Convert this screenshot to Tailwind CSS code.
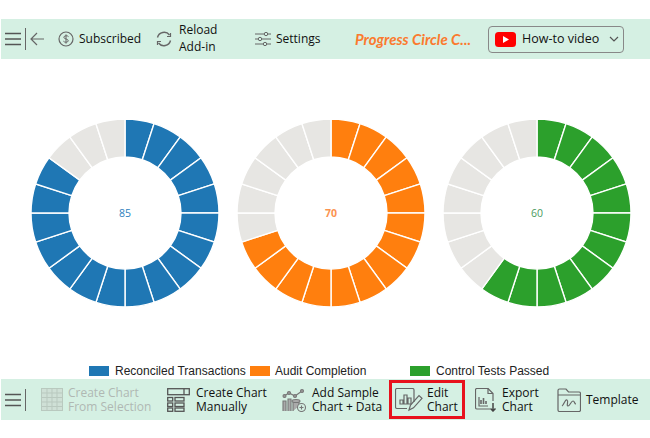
<!DOCTYPE html>
<html lang="en">
<head>
  <meta charset="UTF-8" />
  <title>Progress Circle Chart</title>
  <script src="https://cdn.jsdelivr.net/npm/@tailwindcss/browser@4"></script>
</head>
<body class="bg-white w-[650px] h-[438px] overflow-hidden font-['Open_Sans',sans-serif] text-[12px] leading-[14px] text-[#111]">

  <div class="h-[19px]"></div>

  <!-- Top toolbar -->
  <header class="ml-px h-[40px] bg-[#d5f0e3] flex items-center">
    <svg class="ml-1 w-[16px] h-[14px]" viewBox="0 0 16 14" fill="none" stroke="#555" stroke-width="1.6"><path d="M0 1.500h16M0 7h16M0 12.500h16"/></svg>
    <div class="ml-1 w-px h-[22px] bg-[#666]"></div>
    <svg class="ml-1 w-[14px] h-[14px]" viewBox="0 0 14 14" fill="none" stroke="#666" stroke-width="1.200"><path d="M14 7H1M7 1 1 7l6 6"/></svg>
    <svg class="ml-[14px] w-[16px] h-[16px]" viewBox="0 0 16 16" fill="none" stroke="#666" stroke-width="1.200"><circle cx="8" cy="8" r="7"/><path d="M10.500 5.600C10 4.600 6 4.200 5.800 6.200 5.700 8.300 10.400 7.600 10.300 9.900 10 11.800 6 11.400 5.400 10.200M8 3.400v9.200" stroke-width="1"/></svg>
    <span class="ml-[5px] w-[62px] whitespace-nowrap">Subscribed</span>
    <svg class="ml-[14px] w-[18px] h-[18px]" viewBox="0 0 18 18" fill="none" stroke="#666" stroke-width="1.400"><path d="M2.500 7.500A6.800 6.800 0 0 1 14.500 5M15.500 10.500A6.800 6.800 0 0 1 3.500 13"/><path d="M15.500 3v3.500H12M2.500 15v-3.500H6" stroke-width="1.200"/></svg>
    <span class="ml-[6px] w-[76px] leading-[17px] -mt-[3px]">Reload<br />Add-in</span>
    <svg class="w-[16px] h-[14px]" viewBox="0 0 16 14" fill="none" stroke="#666" stroke-width="1"><path d="M0 2h9M13 2h3M0 7h3M7 7h9M0 12h8M12 12h4"/><circle cx="11" cy="2" r="1.700"/><circle cx="5" cy="7" r="1.700"/><circle cx="10" cy="12" r="1.700"/></svg>
    <span class="ml-[5px] w-[45px] whitespace-nowrap">Settings</span>
    <span class="ml-[34px] w-[133px] font-['Lato',sans-serif] font-bold italic text-[15px] text-[#fb7a2e] whitespace-nowrap">Progress Circle C...</span>
    <div class="w-[136px] h-[27px] border border-[#888] rounded-[4px] flex items-center pl-[6px]">
      <svg class="w-[21px] h-[15px]" viewBox="0 0 21 15"><rect width="21" height="15" rx="3.500" fill="#f00"/><path d="M8 4v7l6-3.500z" fill="#fff"/></svg>
      <span class="ml-[6px] w-[87px] text-[12.5px] whitespace-nowrap">How-to video</span>
      <svg class="w-[10px] h-[6px]" viewBox="0 0 10 6" fill="none" stroke="#555" stroke-width="1.200"><path d="m1 1 4 4 4-4"/></svg>
    </div>
  </header>

  <!-- Progress circles -->
  <main class="h-[304px] pt-[59px] pl-[30px] flex gap-[16px]">
    <svg class="donut w-[190px] h-[190px]" data-value="85" data-color="#1f77b4" viewBox="-95 -95 190 190">
      <text class="font-['Open_Sans',sans-serif] text-[10.500px]" y="4" text-anchor="middle" fill="#2e7fbd">85</text>
    </svg>
    <svg class="donut w-[190px] h-[190px]" data-value="70" data-color="#ff7f0e" viewBox="-95 -95 190 190">
      <text class="font-['Open_Sans',sans-serif] font-bold text-[10.500px]" y="4" text-anchor="middle" fill="#fb9350">70</text>
    </svg>
    <svg class="donut w-[190px] h-[190px]" data-value="60" data-color="#2ca02c" viewBox="-95 -95 190 190">
      <text class="font-['Open_Sans',sans-serif] text-[10.500px]" y="4" text-anchor="middle" fill="#4a9a60">60</text>
    </svg>
  </main>

  <!-- Legend -->
  <div class="h-[16px] flex items-center font-['Liberation_Sans',sans-serif] text-[12px] text-[#222] whitespace-nowrap">
    <span class="ml-[89px] w-[20px] h-[10px] bg-[#1f77b4]"></span>
    <span class="ml-[6px] w-[135px]">Reconciled Transactions</span>
    <span class="w-[20px] h-[10px] bg-[#ff7f0e]"></span>
    <span class="ml-[5px] w-[135px]">Audit Completion</span>
    <span class="w-[20px] h-[10px] bg-[#2ca02c]"></span>
    <span class="ml-[6px]">Control Tests Passed</span>
  </div>

  <!-- Bottom toolbar -->
  <footer class="ml-px h-[41px] bg-[#d5f0e3] flex items-center">
    <svg class="ml-1 w-[16px] h-[14px]" viewBox="0 0 16 14" fill="none" stroke="#555" stroke-width="1.600"><path d="M0 1.500h16M0 7h16M0 12.500h16"/></svg>
    <div class="ml-1 w-px h-[22px] bg-[#666]"></div>

    <svg class="ml-[15px] w-[22px] h-[23px]" viewBox="0 0 22 23" fill="#cfe0d6" stroke="#b9c9bf" stroke-width="1"><rect x=".5" y=".5" width="21" height="22"/><path d="M.5 5h21M.5 9.500h21M.5 14h21M.5 18.500h21M6 .5v22M11 .5v22M16 .5v22" fill="none"/></svg>
    <span class="ml-[5px] w-[99px] mt-px whitespace-nowrap text-[#b0b8b3]">Create Chart<br />From Selection</span>

    <svg class="w-[23px] h-[24px]" viewBox="0 0 23 24" fill="none" stroke="#555" stroke-width="1.300"><rect x=".7" y=".7" width="21.600" height="6"/><path d="M17 .7v6"/><rect x=".7" y="9.500" width="5" height="3.500"/><rect x="8" y="9.500" width="9" height="3.500"/><rect x=".7" y="15" width="5" height="3.500"/><rect x="8" y="15" width="9" height="3.500"/><rect x=".7" y="20" width="5" height="3.300"/><rect x="8" y="20" width="9" height="3.300"/></svg>
    <span class="ml-[6px] w-[86px] mt-px whitespace-nowrap">Create Chart<br />Manually</span>

    <svg class="w-[24px] h-[24px]" viewBox="0 0 24 24" fill="none" stroke="#777" stroke-width="1.100"><path d="M2 8l5-3 6 3 7-5"/><circle cx="2.500" cy="8" r="1.500" fill="#999"/><circle cx="7" cy="5" r="1.500" fill="#999"/><circle cx="13" cy="8" r="1.500" fill="#999"/><circle cx="20" cy="3" r="1.500" fill="#999"/><path d="M1 23V13h3v10M6 23V11h3v12M11 23v-9h6v4" fill="#aaa"/><ellipse cx="14" cy="13" rx="4" ry="1.500" fill="#aaa"/><circle cx="19.500" cy="19.500" r="4" fill="#d5f0e3"/><path d="M19.500 17.500v4M17.500 19.500h4"/></svg>
    <span class="ml-[6px] w-[77px] mt-px whitespace-nowrap">Add Sample<br />Chart + Data</span>

    <div class="w-[76px] h-[39px] border-[3px] border-[#e8111c] flex items-center">
      <svg class="ml-[3px] w-[28px] h-[24px]" viewBox="0 0 28 24" fill="none" stroke="#666" stroke-width="1.200"><path d="M19 14V2a1.500 1.500 0 0 0-1.500-1.500H2A1.500 1.500 0 0 0 .5 2v17A1.500 1.500 0 0 0 2 20.500h10"/><path d="M5 16v-4h3v4zM9 16V7h3v9zM13 16v-6h3v6z"/><path d="M14 22l1.500-5L24 7.500l3 2.800-8.500 9.500z"/></svg>
      <span class="ml-[4px] w-[33px] mt-px">Edit<br />Chart</span>
    </div>

    <svg class="ml-[10px] w-[22px] h-[24px]" viewBox="0 0 22 24" fill="none" stroke="#666" stroke-width="1.200"><path d="M15 21H2a1.500 1.500 0 0 1-1.500-1.500v-18A1.500 1.500 0 0 1 2 .5h11l5 5V13"/><path d="M13 .5v5h5M4 9v9h9"/><path d="M6 16v-4M8.500 16v-6M11 16v-3" stroke-width="1.600"/><path d="M18 15v8M15.500 20.500 18 23l2.500-2.500" stroke="#444" stroke-width="1.500"/></svg>
    <span class="ml-[5px] w-[55px] mt-px">Export<br />Chart</span>

    <svg class="w-[24px] h-[24px]" viewBox="0 0 24 24" fill="none" stroke="#666" stroke-width="1.200"><path d="M1 22V2.500A1.500 1.500 0 0 1 2.500 1H9l2.500 3H22a1.500 1.500 0 0 1 1.500 1.500V22a1.500 1.500 0 0 1-1.500 1.500H2.500A1.500 1.500 0 0 1 1 22zM1 7h22.500"/><path d="M5 18c2-1 3-7 5-6s-1 6 1 6 3-5 5-5 1 3 3 3"/></svg>
    <span class="ml-[5px] mt-px">Template</span>
  </footer>

  <script>
    // 20 wedges per ring, filled clockwise from 12 o'clock
    const rOuter = 94, rInner = 56, step = 18;

    function wedge(i) {
      const a0 = (i * step - 90) * Math.PI / 180;
      const a1 = ((i + 1) * step - 90) * Math.PI / 180;
      const p = (r, a) => (r * Math.cos(a)).toFixed(2) + " " + (r * Math.sin(a)).toFixed(2);
      return "M" + p(rOuter, a0) + "A" + rOuter + " " + rOuter + " 0 0 1 " + p(rOuter, a1) +
        "L" + p(rInner, a1) + "A" + rInner + " " + rInner + " 0 0 0 " + p(rInner, a0) + "Z";
    }

    document.querySelectorAll(".donut").forEach(svg => {
      const filled = Math.round(Number(svg.dataset.value) / 5);
      for (let i = 0; i < 20; i++) {
        const path = document.createElementNS("http://www.w3.org/2000/svg", "path");
        path.setAttribute("d", wedge(i));
        path.setAttribute("fill", i < filled ? svg.dataset.color : "#e7e6e3");
        path.setAttribute("stroke", "#fff");
        path.setAttribute("stroke-width", "1.4");
        svg.insertBefore(path, svg.querySelector("text"));
      }
    });
  </script>
</body>
</html>
